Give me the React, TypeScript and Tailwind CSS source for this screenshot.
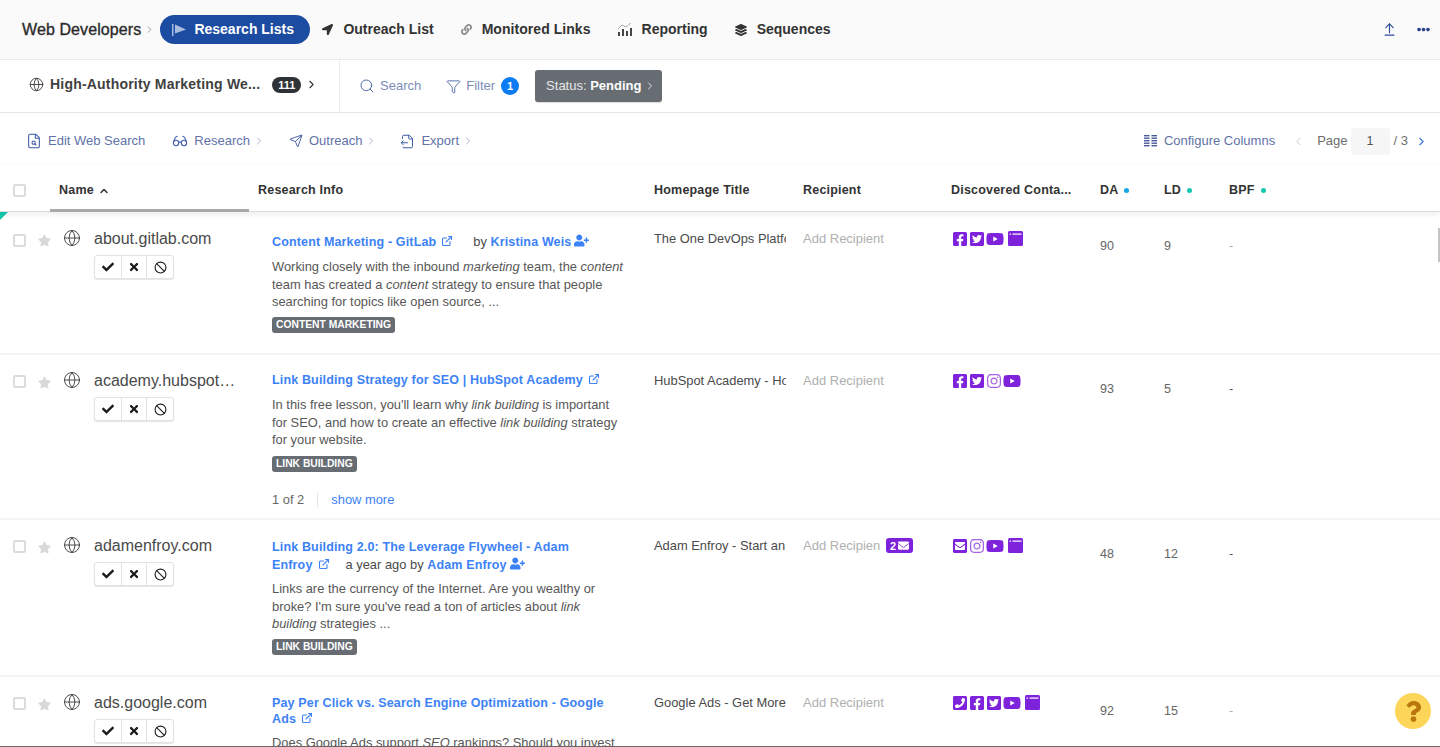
import React from "react";
import { Globe, Search, Filter, ChevronRight, ChevronLeft, ChevronUp, FileSearch, Glasses, Send, FileOutput, ExternalLink, Ban, ArrowUpFromLine } from "lucide-react";
import { FaCheck, FaTimes, FaStar, FaUserPlus, FaLink, FaLayerGroup, FaLocationArrow, FaFacebookSquare, FaTwitterSquare, FaYoutube, FaInstagram, FaEnvelopeSquare, FaPhoneSquare, FaEnvelope, FaQuestion, FaEllipsisH } from "react-icons/fa";

const Pennant = () => (
  <svg width="15" height="14" viewBox="0 0 15 14" className="shrink-0">
    <rect x="0" y="1" width="1.5" height="12" fill="#a9bce0" />
    <path d="M3 1.5 L14 6.5 L3 10.5 Z" fill="#a9bce0" />
  </svg>
);
const Bars = () => (
  <svg width="14" height="13" viewBox="0 0 14 13" className="shrink-0" fill="#444">
    <rect x="0" y="9" width="2" height="4" />
    <rect x="4" y="6" width="2" height="7" />
    <rect x="8" y="8" width="2" height="5" />
    <rect x="12" y="5" width="2" height="8" />
    <path d="M0 6 L4 2 L8 4 L13 0" stroke="#aaa" strokeWidth="1" fill="none" />
  </svg>
);
const ColumnsIcon = () => (
  <svg width="13" height="12" viewBox="0 0 13 12" className="shrink-0" fill="#4a5a9c">
    {[0, 2.5, 5, 7.5, 10].map((y) => (
      <g key={y}>
        <rect x="0" y={y} width="5.5" height="1.4" />
        <rect x="7.5" y={y} width="5.5" height="1.4" />
      </g>
    ))}
  </svg>
);
const Win = () => (
  <svg width="15" height="15" viewBox="0 0 15 15" className="shrink-0 ml-[3px]">
    <rect x="0" y="0" width="15" height="15" rx="1.5" fill="#7e22dc" />
    <rect x="1.5" y="2.5" width="1.5" height="1.2" fill="#fff" />
    <rect x="4.5" y="2.5" width="9" height="1.2" fill="#fff" />
  </svg>
);

const purple = "text-[#7e22dc]";
const Fb = () => <FaFacebookSquare className={`${purple} text-[16px]`} />;
const Tw = () => <FaTwitterSquare className={`${purple} text-[16px]`} />;
const Yt = () => <FaYoutube className={`${purple} text-[18px] -mt-[1px]`} />;
const Ig = () => <FaInstagram className={`${purple} text-[16px] opacity-70`} />;
const Env = () => <FaEnvelopeSquare className={`${purple} text-[16px]`} />;
const Ph = () => <FaPhoneSquare className={`${purple} text-[16px]`} />;

const NavItem = ({ icon, label, className }: { icon: React.ReactNode; label: string; className: string }) => (
  <div className={`flex items-center text-[14px] font-bold text-[#333] ${className}`}>
    {icon}
    <span>{label}</span>
  </div>
);

const ToolItem = ({ icon, label, chevron, className }: { icon: React.ReactNode; label: string; chevron?: boolean; className: string }) => (
  <div className={`flex items-center text-[13px] text-[#6272a8] ${className}`}>
    {icon}
    <span className="ml-[6px]">{label}</span>
    {chevron && <ChevronRight size={12} strokeWidth={1.5} className="ml-[3px] text-[#8d97bd]" />}
  </div>
);

const Tag = ({ children }: { children: React.ReactNode }) => (
  <span className="inline-block bg-[#676d73] text-white text-[10.3px] font-bold leading-[16px] px-[4px] rounded-[3px]">{children}</span>
);

const Title = ({ children }: { children: React.ReactNode }) => (
  <span className="text-[#3c82f6] font-bold tracking-[0.15px]">{children}</span>
);
const Ext = () => <ExternalLink size={12} strokeWidth={2.2} className="inline-block text-[#3c82f6] ml-[5px] align-[-1px]" />;
const Adder = () => <FaUserPlus className="inline-block ml-[3px] text-[15px] text-[#3c82f6] align-[-2px]" />;
const Meta = ({ children, className }: { children: React.ReactNode; className: string }) => (
  <span className={`text-[12.9px] leading-none ${className}`}>{children}</span>
);

type RowProps = {
  domain: string;
  title: React.ReactNode;
  snippet: React.ReactNode;
  tag?: string;
  extra?: React.ReactNode;
  homepage: string;
  recipient: React.ReactNode;
  icons: React.ReactNode;
  da: string;
  ld: string;
  height: string;
  dashDark?: boolean;
  infoPad: string;
  snipGap: string;
  tagGap: string;
  titleLead: string;
  first?: boolean;
};

const Row = ({ domain, title, snippet, tag, extra, homepage, recipient, icons, da, ld, height, dashDark, infoPad, snipGap, tagGap, titleLead, first }: RowProps) => (
  <div className={`grid grid-cols-[249px_396px_149px_149px_149px_64px_64px_1fr] border-b-2 border-[#f5f5f5] ${height}`}>
    <div className={`flex pl-[13px] ${first ? "pt-[17px]" : "pt-[16px]"}`}>
      <div className={`w-[13px] h-[13px] border-2 border-[#dcdcdc] rounded-[2px] bg-white shrink-0 ${first ? "mt-[5px]" : "mt-[4px]"}`} />
      <FaStar className="ml-[12px] mt-[5px] text-[#d9d9d9] text-[13px] shrink-0" />
      <Globe size={18} strokeWidth={1.2} className="ml-[12px] text-[#3a3a3a] shrink-0" />
      <div className="ml-[13px] min-w-0">
        <div className="text-[16px] leading-[20px] text-[#4a4a4a] w-[143px] truncate">{domain}</div>
        <div className="mt-[6px] flex w-[80px] h-[24px] border border-[#e2e2e2] rounded-[3px] shadow-[0_1px_1px_rgba(0,0,0,0.1)] bg-white">
          <div className="w-[27px] flex items-center justify-center border-r border-[#e2e2e2]"><FaCheck className="text-[12px] text-[#1c1c1c]" /></div>
          <div className="w-[25px] flex items-center justify-center border-r border-[#e2e2e2]"><FaTimes className="text-[12px] text-[#1c1c1c]" /></div>
          <div className="flex-1 flex items-center justify-center"><Ban size={13} strokeWidth={2} className="text-[#1c1c1c]" /></div>
        </div>
      </div>
    </div>
    <div className={`pl-[23px] pr-[20px] ${infoPad}`}>
      <div className={`text-[12.5px] text-[#4a4a4a] ${titleLead}`}>{title}</div>
      <div className={`text-[12.9px] leading-[17.5px] text-[#575757] ${snipGap}`}>{snippet}</div>
      {tag && <div className={`leading-[16px] flex ${tagGap}`}><Tag>{tag}</Tag></div>}
      {extra}
    </div>
    <div className={`pl-[9px] text-[12.9px] leading-[14px] text-[#4a4a4a] whitespace-nowrap overflow-hidden w-[141px] ${first ? "pt-[20px]" : "pt-[19px]"}`}>{homepage}</div>
    <div className={`pl-[9px] text-[13px] leading-[14px] text-[#b0b0b0] whitespace-nowrap flex items-start ${first ? "pt-[20px]" : "pt-[19px]"}`}>{recipient}</div>
    <div className={`pl-[9px] flex items-start gap-[1px] h-fit [&>svg]:shrink-0 ${first ? "pt-[19px]" : "pt-[18px]"}`}>{icons}</div>
    <div className="pl-[8px] pt-[27px] text-[12.5px] leading-[14px] text-[#666]">{da}</div>
    <div className="pl-[8px] pt-[27px] text-[12.5px] leading-[14px] text-[#666]">{ld}</div>
    <div className={`pl-[9px] pt-[27px] text-[12.5px] leading-[14px] ${dashDark ? "text-[#555]" : "text-[#aaa]"}`}>-</div>
  </div>
);

export default function App() {
  return (
    <div className="relative w-[1440px] h-[747px] overflow-hidden bg-white font-['Liberation_Sans',Arial,sans-serif]">
      {/* top nav */}
      <div className="h-[60px] bg-[#fafafa] border-b border-[#e8e8e8] flex items-center pl-[22px] pr-[10px]">
        <span className="text-[16px] text-[#2b2b2b] tracking-[0.1px] [-webkit-text-stroke:0.35px_#2b2b2b]">Web Developers</span>
        <ChevronRight size={11} strokeWidth={1.5} className="ml-[3px] text-[#777]" />
        <div className="ml-[5px] h-[29px] w-[150px] rounded-full bg-[#1b4ca1] flex items-center pl-[12px] gap-[7px] text-white text-[14px] font-bold">
          <Pennant />
          <span>Research Lists</span>
        </div>
        <NavItem className="ml-[12px]" icon={<FaLocationArrow className="text-[11px] text-[#333] mr-[10px]" />} label="Outreach List" />
        <NavItem className="ml-[27px] tracking-[0.05px]" icon={<FaLink className="text-[11px] text-[#888] mr-[10px]" />} label="Monitored Links" />
        <NavItem className="ml-[27px]" icon={<span className="mr-[10px] flex"><Bars /></span>} label="Reporting" />
        <NavItem className="ml-[27px]" icon={<FaLayerGroup className="text-[12px] text-[#333] mr-[10px]" />} label="Sequences" />
        <div className="ml-auto flex items-center gap-[20px]">
          <ArrowUpFromLine size={15} strokeWidth={1.8} className="text-[#2c4a9a]" />
          <FaEllipsisH className="text-[13px] text-[#2c3f8c]" />
        </div>
      </div>

      {/* filter bar */}
      <div className="h-[53px] border-b border-[#e5e5e5] flex items-center">
        <div className="w-[340px] h-full border-r border-[#ececec] flex items-center pl-[29px] pb-[3px]">
          <Globe size={15} strokeWidth={1.5} className="text-[#444]" />
          <span className="ml-[6px] text-[14px] font-bold text-[#3f3f3f] tracking-[0.2px]">High-Authority Marketing We...</span>
          <span className="ml-[12px] w-[29px] h-[16px] rounded-full bg-[#2f3338] text-white text-[11px] font-bold leading-[16px] text-center">111</span>
          <ChevronRight size={13} strokeWidth={2} className="ml-[4px] text-[#333]" />
        </div>
        <div className="flex items-center pl-[19px]">
          <Search size={16} strokeWidth={1.5} className="text-[#4e6aa8]" />
          <span className="ml-[5px] text-[13px] text-[#7d8db8]">Search</span>
          <Filter size={15} strokeWidth={1.5} className="ml-[25px] text-[#4e6aa8]" />
          <span className="ml-[5px] text-[13px] text-[#7d8db8]">Filter</span>
          <span className="ml-[6px] w-[18px] h-[18px] rounded-full bg-[#0d7bf2] text-white text-[11px] font-bold leading-[18px] text-center">1</span>
          <div className="ml-[16px] w-[127px] h-[32px] bg-[#676d73] rounded-[3px] flex items-center pl-[11px] text-[13px] text-white shadow-[0_1px_1px_rgba(0,0,0,0.15)]">
            <span className="text-[#e8e8e8]">Status:&nbsp;</span>
            <span className="font-bold">Pending</span>
            <ChevronRight size={12} strokeWidth={1.5} className="ml-[3px]" />
          </div>
        </div>
      </div>

      {/* tool bar */}
      <div className="h-[52px] flex items-center pl-[26px] pr-[12px] pt-[4px]">
        <ToolItem className="" icon={<FileSearch size={16} strokeWidth={1.6} className="text-[#3e5aa8]" />} label="Edit Web Search" />
        <ToolItem className="ml-[27px]" chevron icon={<Glasses size={16} strokeWidth={1.6} className="text-[#3e5aa8]" />} label="Research" />
        <ToolItem className="ml-[24px]" chevron icon={<Send size={14} strokeWidth={1.6} className="text-[#3e5aa8]" />} label="Outreach" />
        <ToolItem className="ml-[23px]" chevron icon={<FileOutput size={15} strokeWidth={1.6} className="text-[#3e5aa8]" />} label="Export" />
        <div className="ml-auto flex items-center">
          <ColumnsIcon />
          <span className="ml-[7px] text-[13px] text-[#6272a8]">Configure Columns</span>
          <ChevronLeft size={13} strokeWidth={1.5} className="ml-[17px] text-[#bcbcbc]" />
          <span className="ml-[12px] text-[13px] text-[#6e6e6e]">Page</span>
          <span className="ml-[3px] w-[39px] h-[27px] rounded-[3px] bg-[#f6f6f6] text-[12.5px] leading-[27px] text-center text-[#555]">1</span>
          <span className="ml-[4px] text-[13px] text-[#6e6e6e]">/ 3</span>
          <ChevronRight size={13} strokeWidth={2} className="ml-[7px] text-[#3b6fd8]" />
        </div>
      </div>

      {/* table head */}
      <div className="relative z-10 h-[47px] pt-[4px] grid grid-cols-[50px_199px_396px_149px_149px_149px_64px_64px_1fr] items-center text-[12.5px] font-bold text-[#333] tracking-[0.2px] border-b border-[#dedede] shadow-[0_2px_6px_rgba(0,0,0,0.08)] bg-white">
        <div className="pl-[13px]"><div className="w-[13px] h-[13px] border-2 border-[#dcdcdc] rounded-[2px]" /></div>
        <div className="h-full flex items-center pl-[9px] pt-[3px] border-b-[3px] border-[#a9a9a9] mb-[-1px]">
          Name <ChevronUp size={12} strokeWidth={3} className="ml-[4px] text-[#333]" />
        </div>
        <div className="pl-[9px]">Research Info</div>
        <div className="pl-[9px]">Homepage Title</div>
        <div className="pl-[9px]">Recipient</div>
        <div className="pl-[8px]">Discovered Conta...</div>
        <div className="pl-[8px] flex items-center">DA<span className="ml-[6px] w-[5px] h-[5px] rounded-full bg-[#14a8e6]" /></div>
        <div className="pl-[8px] flex items-center">LD<span className="ml-[6px] w-[5px] h-[5px] rounded-full bg-[#14c9ae]" /></div>
        <div className="pl-[9px] flex items-center">BPF<span className="ml-[6px] w-[5px] h-[5px] rounded-full bg-[#14c9ae]" /></div>
      </div>

      {/* rows */}
      <div className="relative">
        <div className="absolute left-0 top-0 w-0 h-0 border-t-[8px] border-r-[8px] border-t-[#14c9ae] border-r-transparent" />
        <Row
          first
          height="h-[143px]"
          infoPad="pt-[21px]"
          titleLead="leading-[17px]"
          snipGap="mt-[7px]"
          tagGap="mt-[6px]"
          domain="about.gitlab.com"
          title={<><Title>Content Marketing - GitLab</Title><Ext /><Meta className="ml-[20px]">by </Meta><Title>Kristina Weis</Title><Adder /></>}
          snippet={<>Working closely with the inbound <i>marketing</i> team, the <i>content</i> team has created a <i>content</i> strategy to ensure that people searching for topics like open source, ...</>}
          tag="CONTENT MARKETING"
          homepage="The One DevOps Platform"
          recipient="Add Recipient"
          icons={<><Fb /><Tw /><Yt /><Win /></>}
          da="90"
          ld="9"
        />
        <Row
          height="h-[165px]"
          infoPad="pt-[17px]"
          titleLead="leading-[17px]"
          snipGap="mt-[7px]"
          tagGap="mt-[7px]"
          domain="academy.hubspot.com"
          title={<><Title>Link Building Strategy for SEO | HubSpot Academy</Title><Ext /></>}
          snippet={<>In this free lesson, you'll learn why <i>link building</i> is important for SEO, and how to create an effective <i>link building</i> strategy for your website.</>}
          tag="LINK BUILDING"
          extra={<div className="mt-[21px] flex items-center text-[12.9px] leading-[14px] text-[#666]"><span>1 of 2</span><span className="ml-[13px] h-[14px] border-l border-[#e5e5e5]" /><span className="ml-[13px] text-[#3c82f6]">show more</span></div>}
          homepage="HubSpot Academy - Home"
          recipient="Add Recipient"
          icons={<><Fb /><Tw /><Ig /><Yt /></>}
          da="93"
          ld="5"
          dashDark
        />
        <Row
          height="h-[157px]"
          infoPad="pt-[19px]"
          titleLead="leading-[16.5px]"
          snipGap="mt-[7px]"
          tagGap="mt-[6px]"
          domain="adamenfroy.com"
          title={<><Title>Link Building 2.0: The Leverage Flywheel - Adam<br />Enfroy</Title><Ext /><Meta className="ml-[16px]">a year ago by </Meta><Title>Adam Enfroy</Title><Adder /></>}
          snippet={<>Links are the currency of the Internet. Are you wealthy or broke? I'm sure you've read a ton of articles about <i>link building</i> strategies ...</>}
          tag="LINK BUILDING"
          homepage="Adam Enfroy - Start an Online"
          recipient={<><span className="w-[77px] overflow-hidden">Add Recipient</span><span className="ml-[6px] -mt-[1px] h-[15px] w-[27px] rounded-[3px] bg-[#7e22dc] flex items-center justify-center gap-[2px] text-white text-[11px] font-bold">2<FaEnvelope className="text-[11px]" /></span></>}
          icons={<><Env /><Ig /><Yt /><Win /></>}
          da="48"
          ld="12"
          dashDark
        />
        <Row
          height="h-[200px]"
          infoPad="pt-[19px]"
          titleLead="leading-[15.5px]"
          snipGap="mt-[7px]"
          tagGap="mt-[5px]"
          domain="ads.google.com"
          title={<><Title>Pay Per Click vs. Search Engine Optimization - Google Ads</Title><Ext /></>}
          snippet={<>Does Google Ads support <i>SEO</i> rankings? Should you invest in paid search or organic search for your business ...</>}
          homepage="Google Ads - Get More Customers"
          recipient="Add Recipient"
          icons={<><Ph /><Fb /><Tw /><Yt /><Win /></>}
          da="92"
          ld="15"
        />
      </div>

      {/* overlays */}
      <div className="absolute right-[9px] top-[693px] w-[36px] h-[36px] rounded-full bg-[#fdd559] flex items-center justify-center">
        <FaQuestion className="text-[21px] text-[#b9770e]" />
      </div>
      <div className="absolute right-0 top-[228px] w-[2px] h-[34px] bg-[#c4c4c4]" />
      <div className="absolute left-0 right-0 bottom-0 h-[1px] bg-[#666]" />
    </div>
  );
}
